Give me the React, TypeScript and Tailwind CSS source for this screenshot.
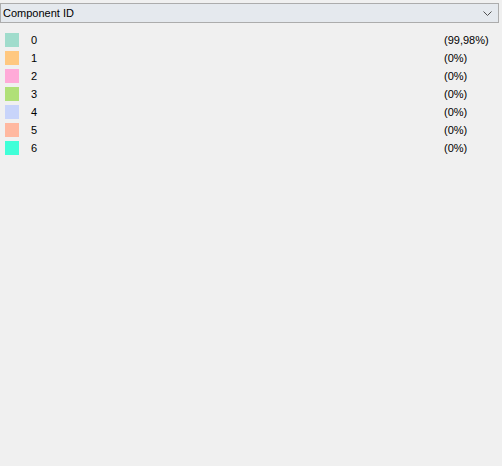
import React from "react";

const rows = [
  { id: "0", color: "#a0dccc", pct: "(99,98%)" },
  { id: "1", color: "#ffc880", pct: "(0%)" },
  { id: "2", color: "#ffaad8", pct: "(0%)" },
  { id: "3", color: "#b0e078", pct: "(0%)" },
  { id: "4", color: "#c8d4fa", pct: "(0%)" },
  { id: "5", color: "#ffb8a0", pct: "(0%)" },
  { id: "6", color: "#40ffd8", pct: "(0%)" },
];

export default function App() {
  return (
    <div
      className="w-[502px] h-[466px] bg-[#f0f0f0] text-[11px] text-black pt-[3px]"
      style={{ fontFamily: '"Liberation Sans", Arial, sans-serif' }}
    >
      {/* combo box */}
      <div className="w-[499px] h-[20px] border border-[#acacac] bg-[#e5e9ee] flex items-center justify-between pl-[2px] pr-[6px]">
        <span>Component ID</span>
        <svg width="9" height="6" viewBox="0 0 9 6" className="mt-[2px]">
          <path d="M0.5 0.5 L4.5 4.5 L8.5 0.5" fill="none" stroke="#505050" strokeWidth="1" />
        </svg>
      </div>

      {/* legend */}
      <div className="pt-[8px]">
        {rows.map((r) => (
          <div key={r.id} className="flex items-center h-[18px] pl-[5px]">
            <div className="w-[14px] h-[14px]" style={{ backgroundColor: r.color }} />
            <span className="ml-[12px] w-[413px]">{r.id}</span>
            <span>{r.pct}</span>
          </div>
        ))}
      </div>
    </div>
  );
}
